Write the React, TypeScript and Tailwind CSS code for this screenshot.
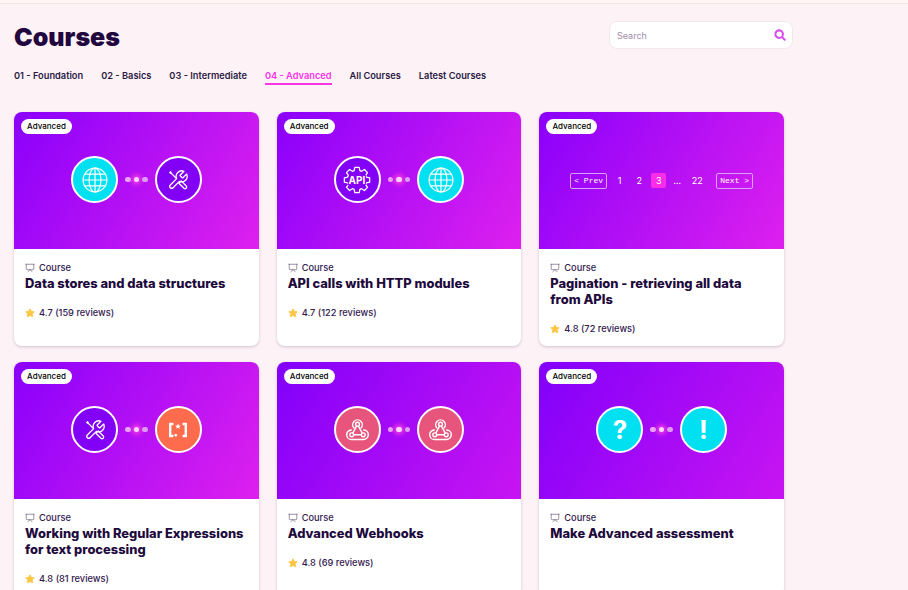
import { Presentation, Star } from "lucide-react";
import type { ReactNode } from "react";

const tabs = ["01 - Foundation", "02 - Basics", "03 - Intermediate", "04 - Advanced", "All Courses", "Latest Courses"];

function gearPath() {
  const pts: string[] = [];
  for (let i = 0; i < 8; i++) {
    const a = (i * Math.PI) / 4 - Math.PI / 2;
    const add = (r: number, d: number) => {
      const x = 12 + r * Math.cos(a + d);
      const y = 12 + r * Math.sin(a + d);
      pts.push(`${x.toFixed(2)} ${y.toFixed(2)}`);
    };
    add(8.4, -0.3);
    add(11, -0.17);
    add(11, 0.17);
    add(8.4, 0.3);
  }
  return "M" + pts.join("L") + "Z";
}

function Globe() {
  return (
    <svg viewBox="0 0 24 24" fill="none" stroke="white" strokeWidth="1.1" className="w-[26px] h-[26px]">
      <circle cx="12" cy="12" r="11" />
      <ellipse cx="12" cy="12" rx="5.5" ry="11" />
      <path d="M12 1v22M1 12h22M2.8 6.5h18.4M2.8 17.5h18.4" />
    </svg>
  );
}

function Tools() {
  return (
    <svg viewBox="0 0 24 24" fill="none" stroke="white" strokeWidth="1.4" strokeLinejoin="round" strokeLinecap="round" className="w-[22px] h-[22px]">
      <path d="M14.7 6.3a1 1 0 0 0 0 1.4l1.6 1.6a1 1 0 0 0 1.4 0l3.77-3.77a6 6 0 0 1-7.94 7.94l-6.91 6.91a2.12 2.12 0 0 1-3-3l6.91-6.91a6 6 0 0 1 7.94-7.94l-3.76 3.76z" />
      <path d="M9.5 9.5L5 5 3 4l1-1 1 2" />
      <path d="M13 15.5l2.5-2.5 5.5 5.5a1.77 1.77 0 0 1-2.5 2.5z" />
    </svg>
  );
}

function ApiGear() {
  return (
    <svg viewBox="0 0 24 24" fill="none" className="w-[28px] h-[28px]">
      <path d={gearPath()} stroke="white" strokeWidth="1.1" strokeLinejoin="round" />
      <text
        x="12"
        y="15.1"
        textAnchor="middle"
        fill="white"
        stroke="#8800f8"
        strokeWidth="2"
        paintOrder="stroke"
        fontFamily="Inter, sans-serif"
        fontWeight="700"
        fontSize="8.6"
      >
        API
      </text>
    </svg>
  );
}

function Regex() {
  return (
    <svg viewBox="0 0 24 24" fill="none" stroke="white" strokeWidth="2.6" className="w-[22px] h-[22px]">
      <path d="M7 5.5H3.5v13H7M17 5.5h3.5v13H17" />
      <path d="M12 5l.9 2 2.1.2-1.6 1.4.5 2.1-1.9-1.1-1.9 1.1.5-2.1L9 7.2l2.1-.2z" fill="white" stroke="none" />
      <circle cx="9.5" cy="17.6" r="1.4" fill="white" stroke="none" />
    </svg>
  );
}

function Hook() {
  return (
    <svg viewBox="0 0 24 24" fill="none" stroke="white" strokeWidth="1.5" strokeLinecap="round" className="w-[23px] h-[23px]">
      <circle cx="12" cy="6.5" r="2" />
      <circle cx="6" cy="17.5" r="2" />
      <circle cx="18" cy="17.5" r="2" />
      <path d="M11 8.5l-3.8 7M8.5 17.5h7M13 8.5l3.8 7" />
      <path d="M8.3 10.3A5 5 0 1 1 15.7 10.3" />
      <path d="M5.5 12.5A5 5 0 0 0 6 22.5h12a5 5 0 0 0 .5-10" />
    </svg>
  );
}

function Circle({ bg, children }: { bg: string; children: ReactNode }) {
  return (
    <div className={`w-[47px] h-[47px] rounded-full border-2 border-white flex items-center justify-center ${bg}`}>
      {children}
    </div>
  );
}

function Dots() {
  return (
    <div className="flex items-center gap-[3px]">
      <span className="w-[5.5px] h-[5.5px] rounded-full bg-[#e9a6f5]" />
      <span className="w-[5.5px] h-[5.5px] rounded-full bg-[#fbd4fb] shadow-[0_0_5px_2px_#ff45e0]" />
      <span className="w-[5.5px] h-[5.5px] rounded-full bg-[#dc9cf2]" />
    </div>
  );
}

function Pair({ left, right }: { left: ReactNode; right: ReactNode }) {
  return (
    <div className="flex items-center gap-[7px] mb-[2px]">
      {left}
      <Dots />
      {right}
    </div>
  );
}

function Pager() {
  const box = "h-[16px] w-[37px] border border-[#d9a0f7] rounded-[2px] flex items-center justify-center text-white text-[8px] font-['Liberation_Mono',monospace]";
  const num = "text-white text-[9px] text-center";
  return (
    <div className="flex items-center">
      <div className={box}>&lt; Prev</div>
      <div className={`${num} w-[25px]`}>1</div>
      <div className={`${num} w-[14px]`}>2</div>
      <div className={`${num} ml-[5px] w-[15px] h-[15px] leading-[15px] rounded-[2px] bg-[#f92de8]`}>3</div>
      <div className={`${num} w-[22px]`}>…</div>
      <div className={`${num} w-[18px]`}>22</div>
      <div className={`${box} ml-[10px]`}>Next &gt;</div>
    </div>
  );
}

const cyan = "bg-[#00e0f0]";
const purple = "bg-[#8200f5]";
const coral = "bg-[#ff6b4d]";
const rose = "bg-[#e8557c]";

const pink = "bg-[linear-gradient(122deg,#8a00fb,#de20ee)]";
const violet = "bg-[linear-gradient(122deg,#8200fa,#c814f2)]";

const glyph = "text-white font-bold text-[26px] leading-none";

const courses: { title: string; rating: string; hero: string; art: ReactNode }[] = [
  {
    title: "Data stores and data structures",
    rating: "4.7 (159 reviews)",
    hero: pink,
    art: <Pair left={<Circle bg={cyan}><Globe /></Circle>} right={<Circle bg={purple}><Tools /></Circle>} />,
  },
  {
    title: "API calls with HTTP modules",
    rating: "4.7 (122 reviews)",
    hero: pink,
    art: <Pair left={<Circle bg={purple}><ApiGear /></Circle>} right={<Circle bg={cyan}><Globe /></Circle>} />,
  },
  {
    title: "Pagination - retrieving all data from APIs",
    rating: "4.8 (72 reviews)",
    hero: pink,
    art: <Pager />,
  },
  {
    title: "Working with Regular Expressions for text processing",
    rating: "4.8 (81 reviews)",
    hero: pink,
    art: <Pair left={<Circle bg={purple}><Tools /></Circle>} right={<Circle bg={coral}><Regex /></Circle>} />,
  },
  {
    title: "Advanced Webhooks",
    rating: "4.8 (69 reviews)",
    hero: violet,
    art: <Pair left={<Circle bg={rose}><Hook /></Circle>} right={<Circle bg={rose}><Hook /></Circle>} />,
  },
  {
    title: "Make Advanced assessment",
    rating: "",
    hero: violet,
    art: (
      <Pair
        left={<Circle bg={cyan}><span className={glyph}>?</span></Circle>}
        right={<Circle bg={cyan}><span className={glyph}>!</span></Circle>}
      />
    ),
  },
];

function Card({ title, rating, hero, art }: { title: string; rating: string; hero: string; art: ReactNode }) {
  return (
    <div className="bg-white rounded-[8px] overflow-hidden shadow-[0_1px_3px_rgba(60,20,70,0.22)] flex flex-col min-h-[234px]">
      <div className={`relative h-[137px] flex items-center justify-center ${hero}`}>
        <span className="absolute left-[7px] top-[7px] w-[51px] h-[15px] text-center rounded-full bg-white text-black text-[8px] font-medium leading-[15px]">
          Advanced
        </span>
        {art}
      </div>
      <div className="pt-[12px] pl-[11px] pr-[11px] pb-[10px]">
        <div className="flex items-center gap-[4px] h-[14px]">
          <Presentation className="w-[10px] h-[10px] text-[#6b5a78]" strokeWidth={1.6} />
          <span className="text-[9.25px] font-medium text-[#33204f]">Course</span>
        </div>
        <h3 className="mt-[1px] text-[12.9px] leading-[16px] font-extrabold text-[#1e0a3c]">{title}</h3>
        {rating && (
          <div className="mt-[14px] flex items-center gap-[4px] h-[14px]">
            <Star className="w-[10px] h-[10px] text-[#fdc644] fill-[#fdc644]" />
            <span className="text-[9.25px] font-medium text-[#33204f]">{rating}</span>
          </div>
        )}
      </div>
    </div>
  );
}

export default function App() {
  return (
    <div className="h-[590px] overflow-hidden bg-[#fdf2f6] font-['Inter',sans-serif]">
      <div className="h-[4px] bg-[#fdf6f3] border-b border-[#f4e6e2]" />
      <div className="pl-[14px] w-[793px]">
        <div className="flex items-start justify-between pt-[17px]">
          <h1 className="text-[25px] leading-[30px] mt-[1px] font-black text-[#22073f]">Courses</h1>
          <div className="w-[184px] h-[28px] bg-white border border-[#f2e7ef] rounded-[8px] flex items-center justify-between pl-[7px] pr-[6px]">
            <span className="text-[9px] pt-[1px] text-[#9e8dab]">Search</span>
            <svg viewBox="0 0 14 14" fill="none" stroke="#d84df0" strokeWidth="2.4" strokeLinecap="round" className="w-[12px] h-[12px]">
              <circle cx="6" cy="6" r="4.4" />
              <path d="M9.5 9.5l3 3" />
            </svg>
          </div>
        </div>
        <nav className="mt-[16px] flex gap-[18px]">
          {tabs.map((t) => (
            <span
              key={t}
              className={
                t === "04 - Advanced"
                  ? "text-[9.25px] leading-[15px] font-semibold text-[#f936e6] border-b-2 border-[#f936e6]"
                  : "text-[9.25px] leading-[15px] font-semibold text-[#2c1a45]"
              }
            >
              {t}
            </span>
          ))}
        </nav>
        <div className="mt-[27px] w-[770px] grid grid-cols-3 gap-x-[18px] gap-y-[16px]">
          {courses.map((c, i) => (
            <Card key={i} title={c.title} rating={c.rating} hero={c.hero} art={c.art} />
          ))}
        </div>
      </div>
    </div>
  );
}
